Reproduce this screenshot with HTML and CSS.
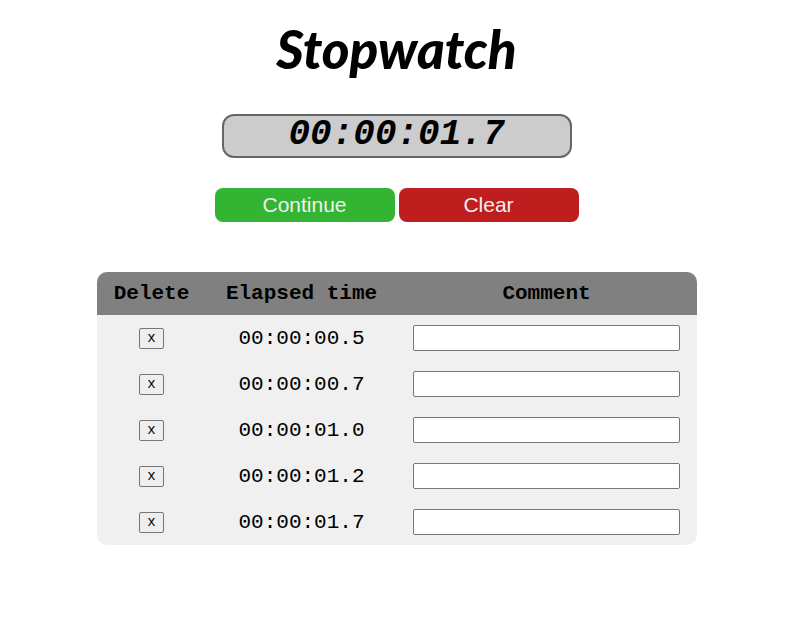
FILE: index.html
```html
<!DOCTYPE html>
<html>
<head>
<meta charset="utf-8">
<link rel="stylesheet" href="styles.css">
</head>
<body>
<h1 class="title">Stopwatch</h1>
<div class="display">00:00:01.7</div>
<div class="controls">
  <button class="btn btn-continue">Continue</button>
  <button class="btn btn-clear">Clear</button>
</div>
<table class="laps">
  <thead>
    <tr><th class="c-del">Delete</th><th class="c-time">Elapsed time</th><th class="c-comment">Comment</th></tr>
  </thead>
  <tbody>
    <tr><td><button class="x">x</button></td><td class="time">00:00:00.5</td><td><input class="comment" type="text"></td></tr>
    <tr><td><button class="x">x</button></td><td class="time">00:00:00.7</td><td><input class="comment" type="text"></td></tr>
    <tr><td><button class="x">x</button></td><td class="time">00:00:01.0</td><td><input class="comment" type="text"></td></tr>
    <tr><td><button class="x">x</button></td><td class="time">00:00:01.2</td><td><input class="comment" type="text"></td></tr>
    <tr><td><button class="x">x</button></td><td class="time">00:00:01.7</td><td><input class="comment" type="text"></td></tr>
  </tbody>
</table>
</body>
</html>
```
FILE: styles.css
```css
html, body { margin: 0; padding: 0; background: #fff; }
body { padding: 20px 4px 0 0; font-family: "Liberation Sans", Arial, sans-serif; }
.title {
  margin: 0;
  text-align: center;
  font-family: Lato, sans-serif;
  font-style: italic;
  font-weight: 900;
  font-size: 53px;
  line-height: 58px;
  color: #000;
}
.display {
  box-sizing: border-box;
  width: 350px;
  height: 44px;
  margin: 36px auto 0;
  background: #cccccc;
  border: 2px solid #666;
  border-radius: 12px;
  text-align: center;
  font-family: "Liberation Mono", monospace;
  font-weight: bold;
  font-style: italic;
  font-size: 36px;
  line-height: 38px;
  color: #000;
}
.controls {
  display: flex;
  justify-content: center;
  gap: 4px;
  margin-top: 30px;
}
.btn {
  width: 180px;
  height: 34px;
  border: none;
  border-radius: 8px;
  color: #f0f0f0;
  font-family: "Liberation Sans", Arial, sans-serif;
  font-size: 21px;
  padding: 0;
}
.btn-continue { background: #33b533; }
.btn-clear { background: #be1e1e; }
.laps {
  width: 600px;
  margin: 50px auto 0;
  border-collapse: separate;
  border-spacing: 0;
  background: #f0f0f0;
  border-radius: 10px;
  overflow: hidden;
  font-family: "Liberation Mono", monospace;
}
.laps th {
  background: #808080;
  height: 43px;
  padding: 0;
  font-size: 21px;
  font-weight: bold;
  color: #000;
}
.c-del { width: 110px; }
.c-time { width: 190px; }
.c-comment { width: 300px; }
.laps td {
  height: 46px;
  padding: 0;
  text-align: center;
  vertical-align: middle;
}
.time { font-size: 21px; color: #000; }
.x {
  box-sizing: border-box;
  width: 25px;
  height: 21px;
  padding: 0;
  font-family: "Liberation Mono", monospace;
  font-size: 14px;
  background: #efefef;
  border: 1px solid #767676;
  border-radius: 2px;
  color: #000;
}
.comment {
  box-sizing: border-box;
  display: block;
  width: 267px;
  height: 26px;
  margin: 0 0 0 16px;
  border: 1px solid #767676;
  border-radius: 2px;
  background: #fff;
}
```
